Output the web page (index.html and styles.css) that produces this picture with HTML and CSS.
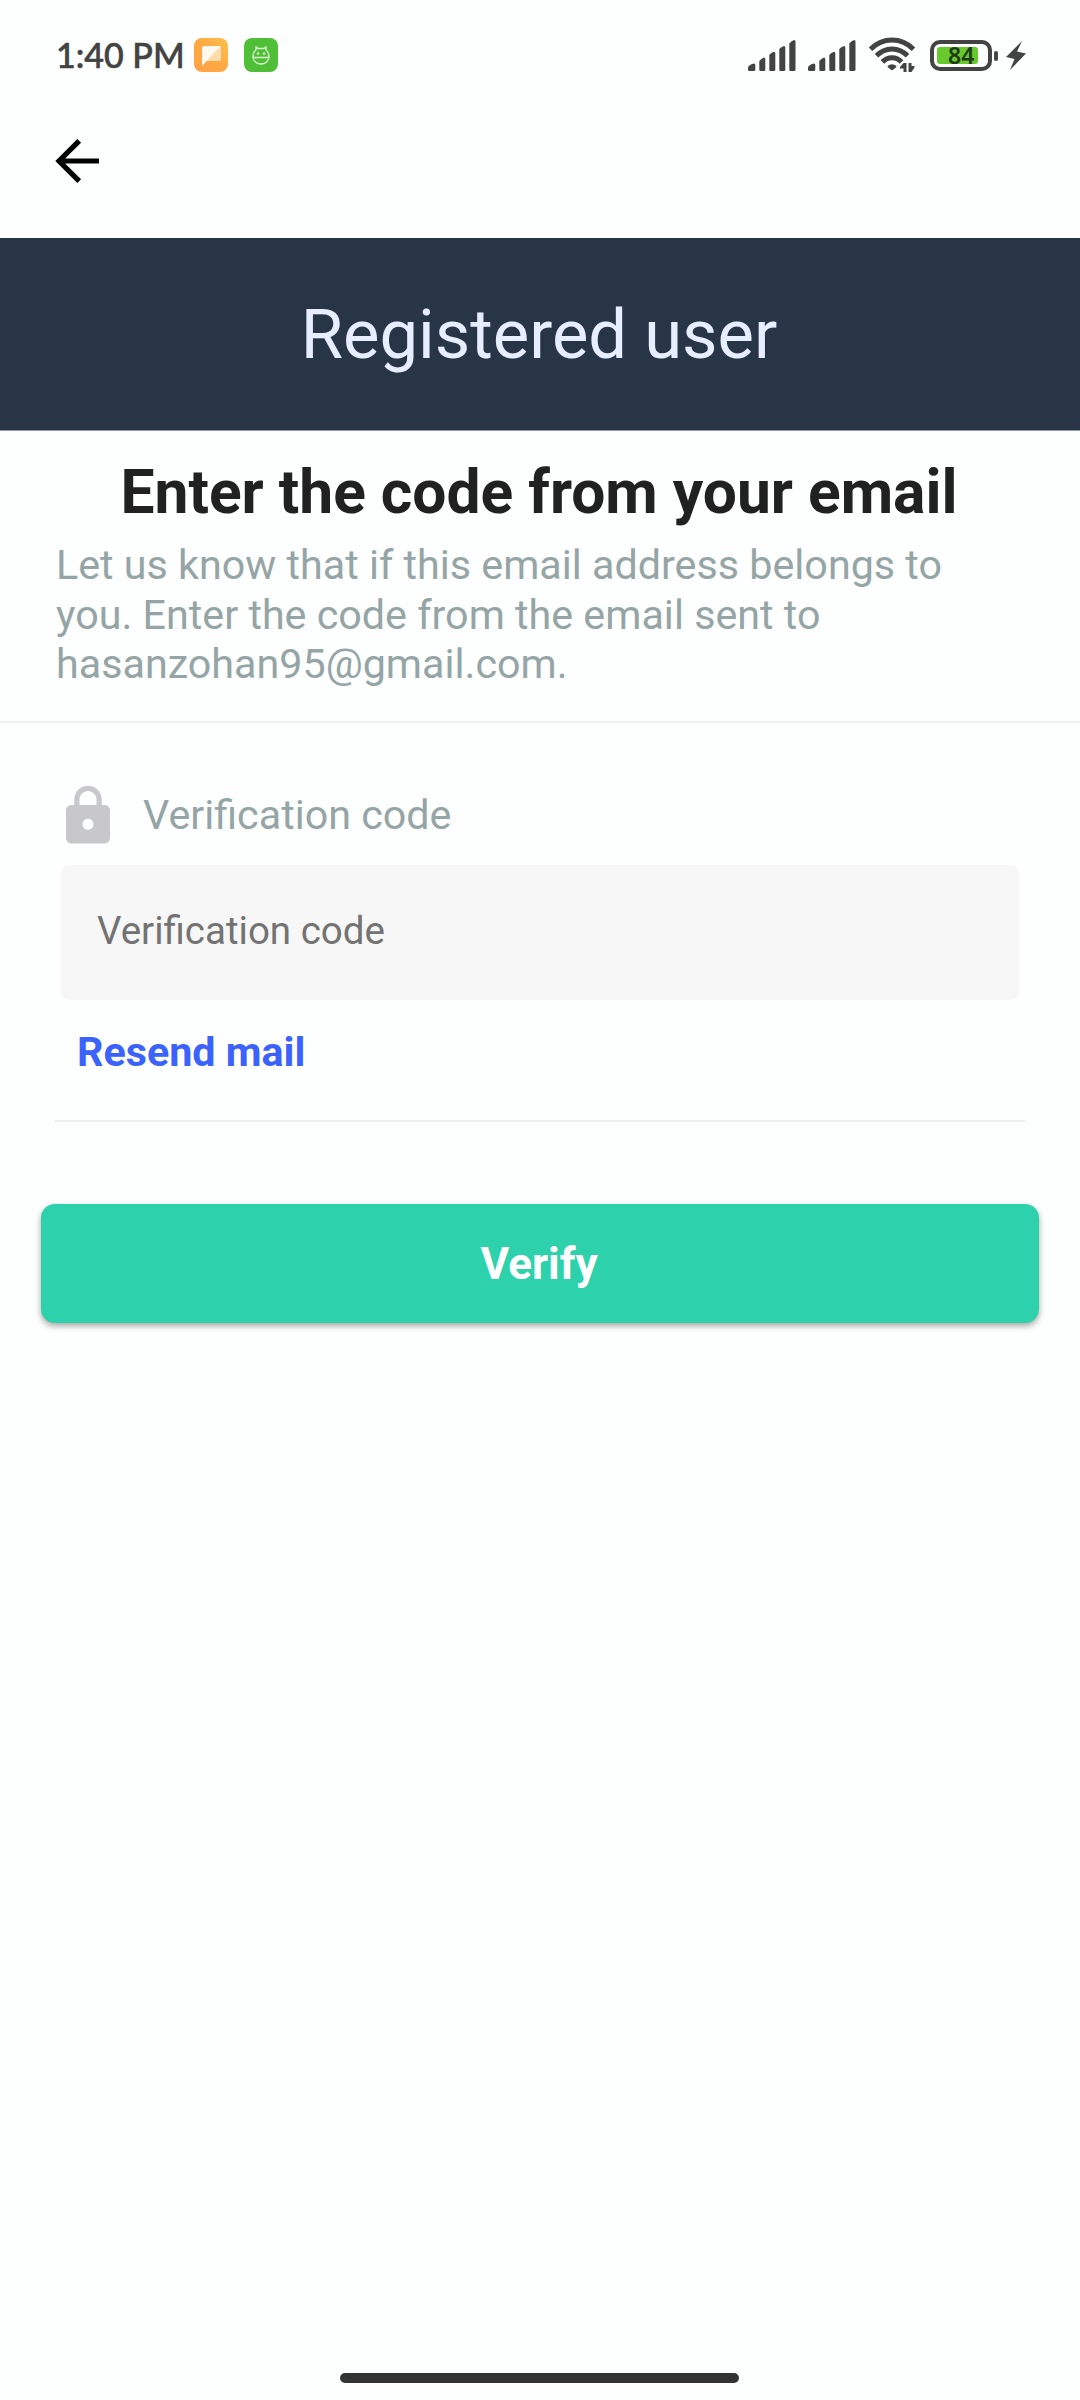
FILE: index.html
```html
<!DOCTYPE html>
<html lang="en">
<head>
<meta charset="utf-8">
<title>Registered user</title>
<link rel="stylesheet" href="styles.css">
</head>
<body>
<div class="status">
  <span class="time">1:40 PM</span>
  <svg class="app app-notes" width="34" height="34" viewBox="0 0 34 34">
    <defs>
      <linearGradient id="orange" x1="1" y1="0" x2="0" y2="1"><stop offset="0" stop-color="#fdc14c"/><stop offset=".5" stop-color="#ffa843"/><stop offset="1" stop-color="#ffa244"/></linearGradient>
    </defs>
    <rect width="34" height="34" rx="8" fill="url(#orange)"/>
    <path d="M27 8V21.500Q27 23 25.500 23H12.500Z" fill="#ffdcae"/>
    <path d="M8 9.500Q8 8 9.500 8H27L8 28Z" fill="#fff8ec"/>
  </svg>
  <svg class="app" width="34" height="34" viewBox="0 0 34 34">
    <rect width="34" height="34" rx="8" fill="#4fbf37"/>
    <g fill="none" stroke="#dcf5d4" stroke-width="1.300" stroke-linejoin="round">
      <path d="M9 19.500C9 15 10.500 13 12 12L12 8.700L14 10.500H20L22 8.700V12C24 13.500 25 16 25 19.500C24.500 23.500 21 26 17 26S9.500 23.500 9 19.500ZM9 19.500H25"/>
    </g>
    <circle cx="14" cy="15.500" r="1.200" fill="#dcf5d4"/><circle cx="20" cy="15.500" r="1.200" fill="#dcf5d4"/>
  </svg>
  <div class="system">
    <svg width="48" height="31" viewBox="0 0 48 31" fill="#434343"><path id="bars" d="M0 28Q0 25 6 23.500Q7.300 23.500 7.300 25V29.500Q7.300 31 6 31H1.500Q0 31 0 29.500ZM11.300 21Q13 18.500 16 17.500Q17.300 17.500 17.300 19V29.500Q17.300 31 16 31H12.500Q11.300 31 11.300 29.500ZM21.300 15Q23 12.800 26 11.800Q27.300 11.800 27.300 13.300V29.500Q27.300 31 26 31H22.500Q21.300 31 21.300 29.500ZM31.300 9Q33 7 36 6Q37.300 6 37.300 7.500V29.500Q37.300 31 36 31H32.500Q31.300 31 31.300 29.500ZM41.300 3.500Q43 1.200 46 0Q47.500 0 47.500 1.500V29.500Q47.500 31 46 31H42.500Q41.300 31 41.300 29.500Z"/></svg>
    <svg class="sim" width="48" height="31" viewBox="0 0 48 31" fill="#434343"><use href="#bars"/></svg>
    <svg class="wifi" width="46" height="36" viewBox="0 0 46 36">
      <g fill="none" stroke="#434343" stroke-width="5">
        <path d="M1.500 12.300Q10.500 3 23 3T44.500 12.300"/>
        <path d="M7.500 18.800Q14 12 23 12T38.500 18.800"/>
        <path d="M13.500 25Q17.500 20.800 23 20.800T32.500 25"/>
      </g>
      <path d="M18.500 29Q23 25.500 27.500 29Q27.500 30.500 23 33.500Q18.500 30.500 18.500 29Z" fill="#434343"/>
      <path d="M34.500 26H37.500V35H34.500V31.500H31V30ZM39.500 26H42.500V29H45.500V30.500L42.500 35H39.500Z" fill="#434343"/>
    </svg>
    <div class="battery"><span class="charge">84</span></div>
    <svg class="bolt" width="20" height="29" viewBox="0 0 20 29"><path d="M16 0L0 16L8.500 18L4 29L20 12.500L11 10.500Z" fill="#434343"/></svg>
  </div>
</div>
<nav class="toolbar">
  <svg width="44" height="44" viewBox="0 0 44 44" fill="none" stroke="#000" stroke-width="5.200"><path d="M24.200 1.800L4 22L24.200 42.200M3 22H44"/></svg>
</nav>
<header class="banner">Registered user</header>
<section class="intro">
  <h1>Enter the code from your email</h1>
  <p>Let us know that if this email address belongs to<br>you. Enter the code from the email sent to<br>hasanzohan95@gmail.com.</p>
</section>
<main class="form">
  <div class="label">
    <svg width="66" height="66" viewBox="0 0 24 24"><path fill="#c8c8ca" d="M18 8h-1V6c0-2.760-2.240-5-5-5S7 3.240 7 6v2H6c-1.100 0-2 .9-2 2v10c0 1.100.9 2 2 2h12c1.100 0 2-.9 2-2V10c0-1.100-.9-2-2-2zm-6 9c-1.100 0-2-.9-2-2s.9-2 2-2 2 .9 2 2-.9 2-2 2zm3.100-9H8.900V6c0-1.710 1.390-3.100 3.100-3.100s3.100 1.390 3.100 3.100v2z"/></svg>
    <span>Verification code</span>
  </div>
  <input class="field" type="text" placeholder="Verification code">
  <div class="resend">Resend mail</div>
</main>
<button class="verify">Verify</button>
<div class="homebar"></div>
</body>
</html>
```
FILE: styles.css
```css
* { box-sizing: border-box; }
body {
  margin: 0;
  width: 1080px;
  height: 2400px;
  display: flex;
  flex-direction: column;
  background: #fdfefe;
  font-family: Roboto, sans-serif;
}
svg { display: block; flex: none; }
.status {
  height: 110px;
  padding: 0 54px 0 56px;
  display: flex;
  align-items: center;
}
.time {
  width: 138px;
  font: 500 34px/40px Lato, sans-serif;
  letter-spacing: 0;
  color: #434343;
  -webkit-text-stroke: .6px #434343;
  white-space: nowrap;
}
.app { margin-right: 16px; }
.system {
  margin-left: auto;
  display: flex;
  align-items: center;
}
.sim { margin-left: 12px; }
.wifi { margin-left: 13px; }
.battery {
  position: relative;
  width: 62px;
  height: 31px;
  margin-left: 15px;
  padding: 3px;
  border: 4px solid #434343;
  border-radius: 10px;
}
.battery::after {
  content: "";
  position: absolute;
  right: -10px;
  top: 7px;
  width: 4px;
  height: 10px;
  border-radius: 2px;
  background: #434343;
}
.charge {
  display: block;
  width: 41px;
  height: 17px;
  padding-left: 11px;
  border-radius: 3px;
  background: #67c92b;
  color: #20391a;
  font: 600 23px/17px "Noto Sans", sans-serif;
}
.bolt { margin-left: 14px; }
.toolbar { height: 128px; padding: 29px 55px; }
.banner {
  height: 193px;
  padding-right: 2px;
  border-bottom: 1px solid #9099a3;
  background: #283546;
  color: #e6eeff;
  text-align: center;
  font-size: 68.75px;
  line-height: 193px;
}
.intro {
  height: 292px;
  padding: 26px 55px 0 56px;
  border-bottom: 2px solid #ecf0f0;
}
.intro h1 {
  margin: 0 3px 0 0;
  text-align: center;
  font-size: 60.5px;
  line-height: 72px;
  color: #212121;
}
.intro p {
  margin: 12px 0 0;
  font-size: 41.25px;
  line-height: 49.5px;
  color: #95a5a6;
}
.form {
  height: 399px;
  margin: 0 55px;
  padding-top: 60px;
  border-bottom: 2px solid #ecf0f0;
}
.label {
  display: flex;
  align-items: center;
  gap: 22px;
  height: 66px;
  font-size: 41.25px;
  line-height: 60px;
  color: #95a5a6;
}
.label span { padding-bottom: 2px; }
.field {
  display: block;
  width: 958px;
  height: 135px;
  margin: 16px 0 0 6px;
  padding: 0 36px 4px;
  border: 0;
  border-radius: 8px;
  background: #f7f7f7;
  box-shadow: 0 0 0 5px #fff;
  font: 38.5px Roboto, sans-serif;
}
.field::placeholder { color: #737373; opacity: 1; }
.resend {
  margin: 27px 0 0 22px;
  font-size: 41.25px;
  line-height: 50px;
  font-weight: 700;
  color: #3b63fb;
}
.verify {
  width: 998px;
  height: 119px;
  margin: 82px 41px 0;
  padding: 1px 2px 0 0;
  border: 0;
  border-radius: 14px;
  background: #2dd1ac;
  box-shadow: 0 3px 6px rgba(0, 0, 0, .35);
  color: #fff;
  font: 700 44px/118px Roboto, sans-serif;
}
.homebar {
  width: 399px;
  height: 10px;
  margin: auto 0 17px 340px;
  border-radius: 5px;
  background: #333;
}
```
